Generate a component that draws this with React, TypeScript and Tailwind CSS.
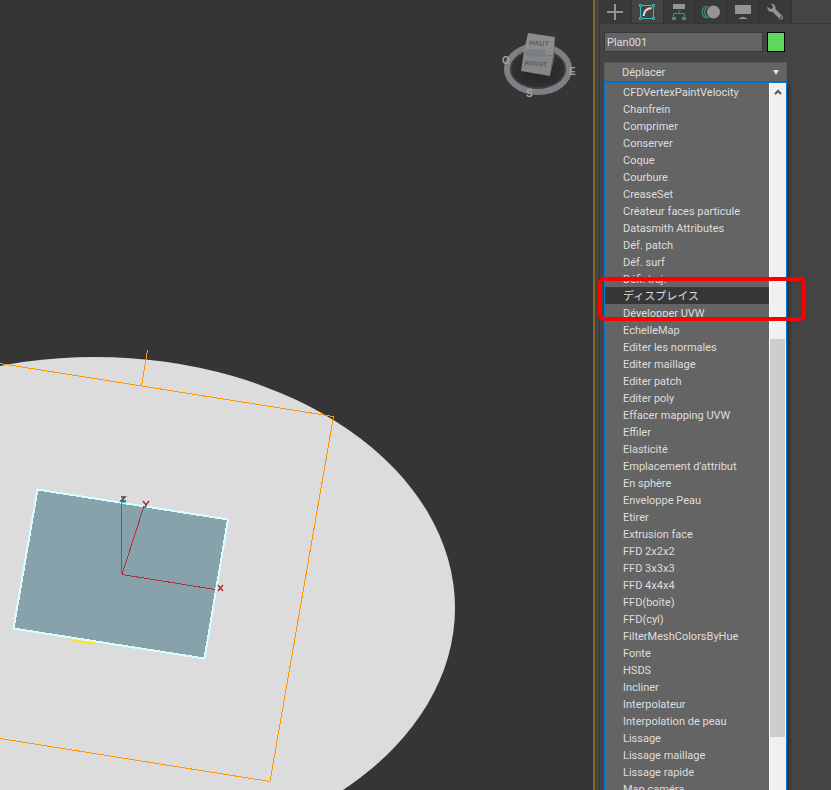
import React, { useState } from 'react';

const modifiers = [
  'CFDVertexPaintVelocity',
  'Chanfrein',
  'Comprimer',
  'Conserver',
  'Coque',
  'Courbure',
  'CreaseSet',
  'Créateur faces particule',
  'Datasmith Attributes',
  'Déf. patch',
  'Déf. surf',
  'Défi. traj.',
  'ディスプレイス',
  'Développer UVW',
  'EchelleMap',
  'Editer les normales',
  'Editer maillage',
  'Editer patch',
  'Editer poly',
  'Effacer mapping UVW',
  'Effiler',
  'Elasticité',
  "Emplacement d'attribut",
  'En sphère',
  'Enveloppe Peau',
  'Etirer',
  'Extrusion face',
  'FFD 2x2x2',
  'FFD 3x3x3',
  'FFD 4x4x4',
  'FFD(boîte)',
  'FFD(cyl)',
  'FilterMeshColorsByHue',
  'Fonte',
  'HSDS',
  'Incliner',
  'Interpolateur',
  'Interpolation de peau',
  'Lissage',
  'Lissage maillage',
  'Lissage rapide',
  'Map caméra',
];

const CreateIcon = () => (
  <svg width="18" height="18" viewBox="0 0 18 18" fill="#949494">
    <path d="M8 1h2v7h7v2h-7v7H8v-7H1V8h7z" />
  </svg>
);

const ModifyIcon = () => (
  <svg width="18" height="18" viewBox="0 0 18 18" fill="none">
    <path d="M4 2.5h10M4 15.5h10M2.5 4v10M15.5 4v10" stroke="#35bdbd" />
    <path d="M1.5 1.5h2v2h-2zM14.5 1.5h2v2h-2zM1.5 14.5h2v2h-2zM14.5 14.5h2v2h-2z" stroke="#35bdbd" />
    <path d="M5.500 13c.5-4.500 3-7.500 8-8" stroke="#dedede" strokeWidth="2" />
  </svg>
);

const HierarchyIcon = () => (
  <svg width="18" height="18" viewBox="0 0 18 18" fill="none">
    <path d="M3 1h12v5H3z" fill="#949494" />
    <path d="M9 7v4M3.500 14v-3.500h11V14" stroke="#3a8d8b" />
    <path d="M2 14h4v3H2zM12 14h4v3h-4z" fill="#3a8d8b" />
  </svg>
);

const MotionIcon = () => (
  <svg width="20" height="18" viewBox="0 0 20 18" fill="none">
    <path
      d="M5 3C0 5.500 0 12.500 5 15M7.500 3C2.500 5.500 2.500 12.500 7.500 15"
      stroke="#3a8d8b"
      strokeWidth="1.300"
    />
    <circle cx="12.500" cy="9" r="6.500" fill="#949494" />
  </svg>
);

const DisplayIcon = () => (
  <svg width="18" height="18" viewBox="0 0 18 18" fill="#949494">
    <path d="M1 2h16v9H1zM7 14h4v1h2v1H5v-1h2z" />
  </svg>
);

const UtilitiesIcon = () => (
  <svg width="18" height="18" viewBox="0 0 18 18">
    <path
      d="M1.500 3.500L4 6l2.500-.5L7 3 4.500.8C7.500.2 10 2.500 9.500 6l7 7.200c1.500 2-.8 4.300-2.800 2.800L6.500 8.800C3.500 9.500.8 7 1.500 3.500z"
      fill="#949494"
    />
    <circle cx="15" cy="14.500" r="1" fill="#393939" />
  </svg>
);

const tabs = [
  { id: 'create', label: 'Créer', Icon: CreateIcon },
  { id: 'modify', label: 'Modifier', Icon: ModifyIcon },
  { id: 'hierarchy', label: 'Hiérarchie', Icon: HierarchyIcon },
  { id: 'motion', label: 'Mouvement', Icon: MotionIcon },
  { id: 'display', label: 'Affichage', Icon: DisplayIcon },
  { id: 'utilities', label: 'Utilitaires', Icon: UtilitiesIcon },
];

const Viewport = () => (
  <svg
    className="block h-full w-full"
    viewBox="0 0 593 790"
    preserveAspectRatio="xMinYMin slice"
    fontFamily="Liberation Sans, sans-serif"
  >
    <defs>
      <radialGradient id="compass">
        <stop offset="0" stopColor="#222222" />
        <stop offset="1" stopColor="#333333" />
      </radialGradient>
    </defs>

    <ellipse cx="95" cy="608" rx="360" ry="251" fill="#dcdcdc" />

    {/* gizmo bounds */}
    <g stroke="#ff9500" fill="none" shapeRendering="crispEdges">
      <path d="M0 363.500L333.500 416.500L270 781.500L0 738.500" />
      <path d="M147.500 350L141.500 386" />
    </g>

    {/* selected plane */}
    <path d="M69 639q12 4 29 4" stroke="#ffe600" strokeWidth="1.500" fill="none" />
    <path
      d="M37.500 489.500L228 519.500L204.500 658.500L13.500 628.500Z"
      fill="#87a2aa"
      stroke="#d8ffff"
      strokeWidth="2"
      shapeRendering="crispEdges"
    />
    <g fill="none" shapeRendering="crispEdges">
      <path d="M121.500 574V503" stroke="#4b6b73" />
      <path d="M122 574.500L144 506M122 574.500L215 589.500" stroke="#b52c3c" />
    </g>
    <path d="M121 502.500h5M144 506.500h3" stroke="#00e8f5" />
    <path d="M121 497h4l-4 4h5" stroke="#444" strokeWidth="1.500" fill="none" />
    <path d="M143 501l3 4 3-4M146 505l-1 3" stroke="#b52c3c" strokeWidth="1.500" fill="none" />
    <path d="M218 585l5 6M223 585l-5 6" stroke="#b52c3c" strokeWidth="1.500" fill="none" />

    {/* view cube */}
    <ellipse cx="538" cy="69" rx="31" ry="23" fill="url(#compass)" stroke="#7c8084" strokeWidth="6" />
    <ellipse cx="538" cy="69" rx="27" ry="19" fill="none" stroke="#55595d" strokeDasharray="2 1" />
    <path d="M528 33L555 37L553 56L524 51Z" fill="#8c8c8c" />
    <path d="M524 51L553 56L550 76L521 71Z" fill="#868686" />
    <path d="M553 56L555 37L554 59L550 76Z" fill="#6e6e6e" />
    <path d="M527 49L545 50L545 57L526 56Z" fill="#797d84" />
    <g fill="#5c5f63" fontSize="7" fontWeight="bold">
      <text x="529" y="45" transform="rotate(4 529 45)">HAUT</text>
      <text x="524" y="65" transform="rotate(5 524 65)">AVANT</text>
    </g>
    <g fill="#a2a2a2" fontSize="10" fontWeight="bold">
      <text x="502" y="64">O</text>
      <text x="569" y="75">E</text>
      <text x="526" y="97">S</text>
    </g>
  </svg>
);

const App = () => {
  const [activeTab, setActiveTab] = useState('modify');
  const [name, setName] = useState('Plan001');
  const [selected, setSelected] = useState('ディスプレイス');

  return (
    <div className="flex h-screen overflow-hidden bg-[#353535] font-['Roboto','Noto_Sans_CJK_JP',sans-serif] text-[11px] text-[#dedede]">
      <main className="min-w-0 flex-1">
        <Viewport />
      </main>

      <aside className="flex w-[238px] flex-none flex-col border-l-2 border-[#80692b] bg-[#444444] pl-1">
        <div className="flex min-h-0 flex-1 flex-col border-l border-[#363636]">
          <nav className="flex h-6 flex-none border-b border-[#383838]">
            {tabs.map(({ id, label, Icon }) => (
              <button
                key={id}
                type="button"
                aria-label={label}
                onClick={() => setActiveTab(id)}
                className={`flex w-8 items-center justify-center border-r border-[#333333] pr-0.5 ${
                  activeTab === id ? 'bg-[#444444]' : 'bg-[#393939]'
                }`}
              >
                <Icon />
              </button>
            ))}
          </nav>

          <div className="flex min-h-0 w-[187px] flex-1 flex-col pl-1">
            <div className="mt-2 mr-0.5 flex h-5 flex-none gap-1">
              <input
                type="text"
                aria-label="Nom"
                value={name}
                onChange={(e) => setName(e.target.value)}
                className="min-w-0 flex-1 border border-[#373737] bg-[#646464] px-0.5 pt-0.5 outline-none"
              />
              <button type="button" aria-label="Couleur" className="w-[18px] border border-black bg-[#5fd75f]" />
            </div>

            <button
              type="button"
              aria-haspopup="listbox"
              className="mt-2.5 flex h-5 flex-none items-center justify-between border border-[#585858] bg-[#646464] pr-[7px] pl-[17px]"
            >
              <span className="pt-0.5">Déplacer</span>
              <svg width="6" height="5" viewBox="0 0 6 5" fill="#dedede">
                <path d="M0 0h6L3 5z" />
              </svg>
            </button>

            <div className="flex min-h-0 flex-1 border border-b-0 border-[#0078d7] bg-[#646464] shadow-[3px_3px_3px_#333333]">
              <ul role="listbox" aria-label="Liste des modificateurs" className="min-w-0 flex-1 overflow-hidden">
                {modifiers.map((modifier) => (
                  <li
                    key={modifier}
                    role="option"
                    aria-selected={selected === modifier}
                    onClick={() => setSelected(modifier)}
                    className={`h-[17px] pl-[18px] leading-[19px] whitespace-nowrap ${
                      selected === modifier ? 'bg-[#373737]' : ''
                    }`}
                  >
                    {modifier}
                  </li>
                ))}
              </ul>
              <div className="flex w-[17px] flex-none flex-col border-l border-white bg-[#f0f0f0]">
                <button type="button" aria-label="Défiler vers le haut" className="flex h-[17px] items-center justify-center">
                  <svg width="8" height="6" viewBox="0 0 8 6" fill="none" stroke="#555555" strokeWidth="2">
                    <path d="M1 5l3-3 3 3" />
                  </svg>
                </button>
                <div className="mt-[239px] mr-px h-[398px] bg-[#cdcdcd]" />
              </div>
            </div>
          </div>
        </div>
      </aside>

      {/* highlight drawn over the list */}
      <div className="pointer-events-none absolute top-[277px] right-[25px] h-11 w-[208px] rounded-md border-4 border-[#ff0000]" />
    </div>
  );
};

export default App;
